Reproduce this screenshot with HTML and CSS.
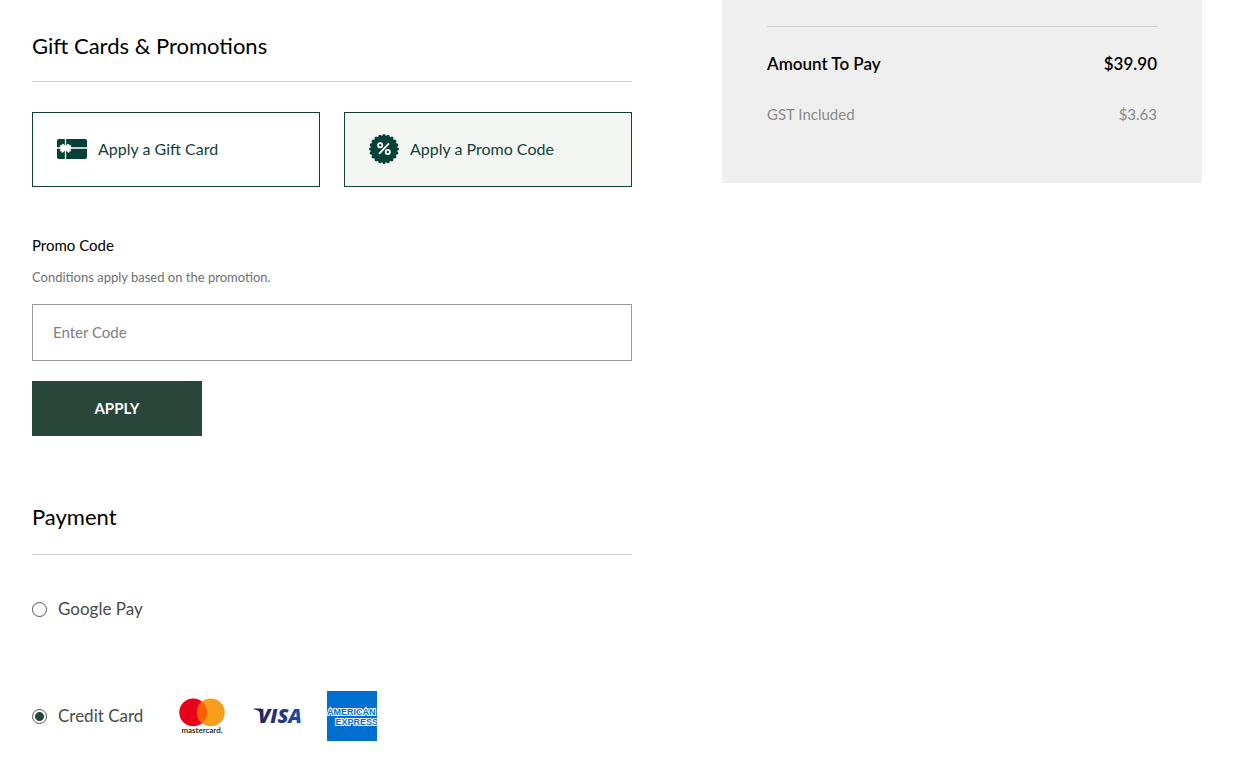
FILE: index.html
```html
<!DOCTYPE html>
<html lang="en">
<head>
<meta charset="utf-8">
<meta name="viewport" content="width=device-width, initial-scale=1">
<title>Checkout</title>
<link rel="stylesheet" href="styles.css">
</head>
<body>
<div class="checkout">
  <main class="main">
    <section class="promotions">
      <h2 class="heading">Gift Cards &amp; Promotions</h2>
      <div class="options">
        <button class="option" type="button" aria-pressed="false">
          <svg class="option-icon" width="30" height="20" viewBox="0 0 30 20" aria-hidden="true">
            <rect width="30" height="20" rx="2" fill="#064137"/>
            <path d="M8.500 0V20M0 9H30" stroke="#fff" stroke-width="1.300"/>
            <path d="M8.500 8L6.800 5.600L5.400 5.200L4.600 6.400L3.200 6.400L3.400 8L2.600 9.200L4.200 10L3 12L4.600 11.900L5 13.500L6.600 12.800L8.500 10.300L10.400 12.800L12 13.500L12.400 11.900L14 12L12.800 10L14.400 9.200L13.600 8L13.800 6.400L12.400 6.400L11.600 5.200L10.200 5.600Z" fill="#fff" stroke="#fff" stroke-width="0.600" stroke-linejoin="round"/>
          </svg>
          <span>Apply a Gift Card</span>
        </button>
        <button class="option option-active" type="button" aria-pressed="true">
          <svg class="option-icon" width="30" height="30" viewBox="0 0 30 30" aria-hidden="true">
            <circle cx="15" cy="15" r="13.500" fill="#064137"/>
            <circle cx="15" cy="15" r="13.400" fill="none" stroke="#064137" stroke-width="3.200" stroke-linecap="round" pathLength="20" stroke-dasharray="0 1"/>
            <g fill="none" stroke="#fff" stroke-width="1.800">
              <circle cx="11.200" cy="11.200" r="2.100"/>
              <circle cx="18.800" cy="18" r="2.100"/>
              <path d="M19.500 9.800L10.500 19.400" stroke-linecap="round"/>
            </g>
          </svg>
          <span>Apply a Promo Code</span>
        </button>
      </div>
      <form class="promo-form">
        <label class="field-label" for="promo">Promo Code</label>
        <p class="hint" id="promo-hint">Conditions apply based on the promotion.</p>
        <input class="field" id="promo" type="text" placeholder="Enter Code" aria-describedby="promo-hint">
        <button class="apply" type="button">APPLY</button>
      </form>
    </section>
    <section class="payment">
      <h2 class="heading heading-payment">Payment</h2>
      <div class="method">
        <input class="radio" type="radio" name="method" id="google">
        <label class="method-label" for="google">Google Pay</label>
      </div>
      <div class="method method-card">
        <input class="radio" type="radio" name="method" id="card" checked>
        <label class="method-label" for="card">Credit Card</label>
        <div class="logos">
          <svg width="50" height="50" viewBox="0 0 50 50" role="img" aria-label="Mastercard">
            <circle cx="16.200" cy="21.400" r="13.900" fill="#eb001b"/>
            <circle cx="33.800" cy="21.400" r="13.900" fill="#f79e1b"/>
            <path d="M25 10.600A13.900 13.900 0 0 1 25 32.200A13.900 13.900 0 0 1 25 10.600Z" fill="#ff5f00"/>
            <text class="mc-word" x="25" y="42" text-anchor="middle">mastercard.</text>
          </svg>
          <svg width="50" height="50" viewBox="0 0 50 50" role="img" aria-label="Visa">
            <defs>
              <linearGradient id="visa-blue" x1="0" x2="1" y1="0" y2="0">
                <stop offset="0" stop-color="#222357"/>
                <stop offset="1" stop-color="#254aa5"/>
              </linearGradient>
            </defs>
            <path d="M1.500 17.500H9L10 20L9 22Q6 19 1.500 18.200Z" fill="#222357"/>
            <text class="visa-word" x="6" y="32" fill="url(#visa-blue)">VISA</text>
          </svg>
          <svg width="50" height="50" viewBox="0 0 50 50" role="img" aria-label="American Express">
            <rect width="50" height="50" fill="#016fd0"/>
            <text class="amex-word" x="0" y="24">AMERICAN</text>
            <text class="amex-word" x="51" y="34" text-anchor="end">EXPRESS</text>
          </svg>
        </div>
      </div>
    </section>
  </main>
  <aside class="summary">
    <dl class="totals">
      <div class="row row-total"><dt>Amount To Pay</dt><dd>$39.90</dd></div>
      <div class="row row-tax"><dt>GST Included</dt><dd>$3.63</dd></div>
    </dl>
  </aside>
</div>
</body>
</html>
```
FILE: styles.css
```css
* { box-sizing: border-box; }
body {
  margin: 0;
  background: #fff;
  color: #000;
  font-family: Futura, "Futura PT", Lato, sans-serif;
  font-size: 16px;
  font-weight: 400;
  line-height: 24px;
}
button, input { font: inherit; }
.checkout {
  display: grid;
  grid-template-columns: 5fr 4fr;
  column-gap: 90px;
  align-items: start;
  padding: 0 34px 32px 32px;
}
.main { padding-top: 30px; }
.heading {
  margin: 0;
  padding-bottom: 19px;
  border-bottom: 1px solid #d0d0d0;
  font-size: 22px;
  font-weight: 400;
  line-height: 32px;
}
.heading-payment { padding-bottom: 21px; }
.options {
  display: grid;
  grid-template-columns: 1fr 1fr;
  gap: 24px;
  margin-top: 30px;
}
.option {
  display: flex;
  align-items: center;
  gap: 11px;
  min-height: 75px;
  padding: 0 24px 2px;
  border: 1px solid #123f36;
  background: #fff;
  color: #123f36;
  text-align: left;
}
.option-active { background: #f3f6f3; }
.option-icon { flex: none; }
.promo-form { margin-top: 46px; }
.field-label { display: block; font-size: 15px; }
.hint {
  margin: 10px 0 17px;
  color: #707070;
  font-size: 13px;
  line-height: 20px;
}
.field {
  display: block;
  width: 100%;
  height: 57px;
  padding: 0 20px 2px;
  border: 1px solid #999;
  border-radius: 0;
  background: #fff;
  font-size: 15px;
}
.field::placeholder { color: #808080; opacity: 1; }
.apply {
  display: block;
  min-width: 170px;
  height: 55px;
  margin-top: 20px;
  padding: 0 0 2px;
  border: 0;
  background: #29463a;
  color: #fff;
  font-size: 15px;
  font-weight: 700;
}
.payment { margin-top: 65px; }
.method {
  display: flex;
  align-items: center;
  margin-top: 42px;
  color: #4a4a4a;
  font-size: 17px;
}
.method-card { margin-top: 70px; }
.radio {
  appearance: none;
  flex: none;
  width: 15px;
  height: 15px;
  margin: 0 11px 0 0;
  border: 1px solid #555;
  border-radius: 50%;
  background: #fff;
}
.radio:checked { background: radial-gradient(circle, #29463a 4px, #fff 5px); }
.method-label { min-width: 84px; }
.logos {
  display: flex;
  gap: 25px;
  margin-left: 34px;
}
.logos svg { display: block; }
.mc-word { font: 600 8px Lato, sans-serif; fill: #111; }
.visa-word { font: italic 800 20px "Open Sans", sans-serif; }
.amex-word {
  font: 700 9px "Liberation Sans", sans-serif;
  fill: #016fd0;
  stroke: #fff;
  stroke-width: 2px;
  paint-order: stroke;
}
.summary {
  padding: 26px 45px 57px;
  background: #efefef;
}
.totals {
  margin: 0;
  padding-top: 25px;
  border-top: 1px solid #d0d0d0;
}
.row {
  display: flex;
  justify-content: space-between;
  gap: 16px;
}
.row dd { margin: 0; }
.row-total { font-size: 17px; font-weight: 600; }
.row-tax { margin-top: 26px; color: #8a8a8a; font-size: 15px; }
```
